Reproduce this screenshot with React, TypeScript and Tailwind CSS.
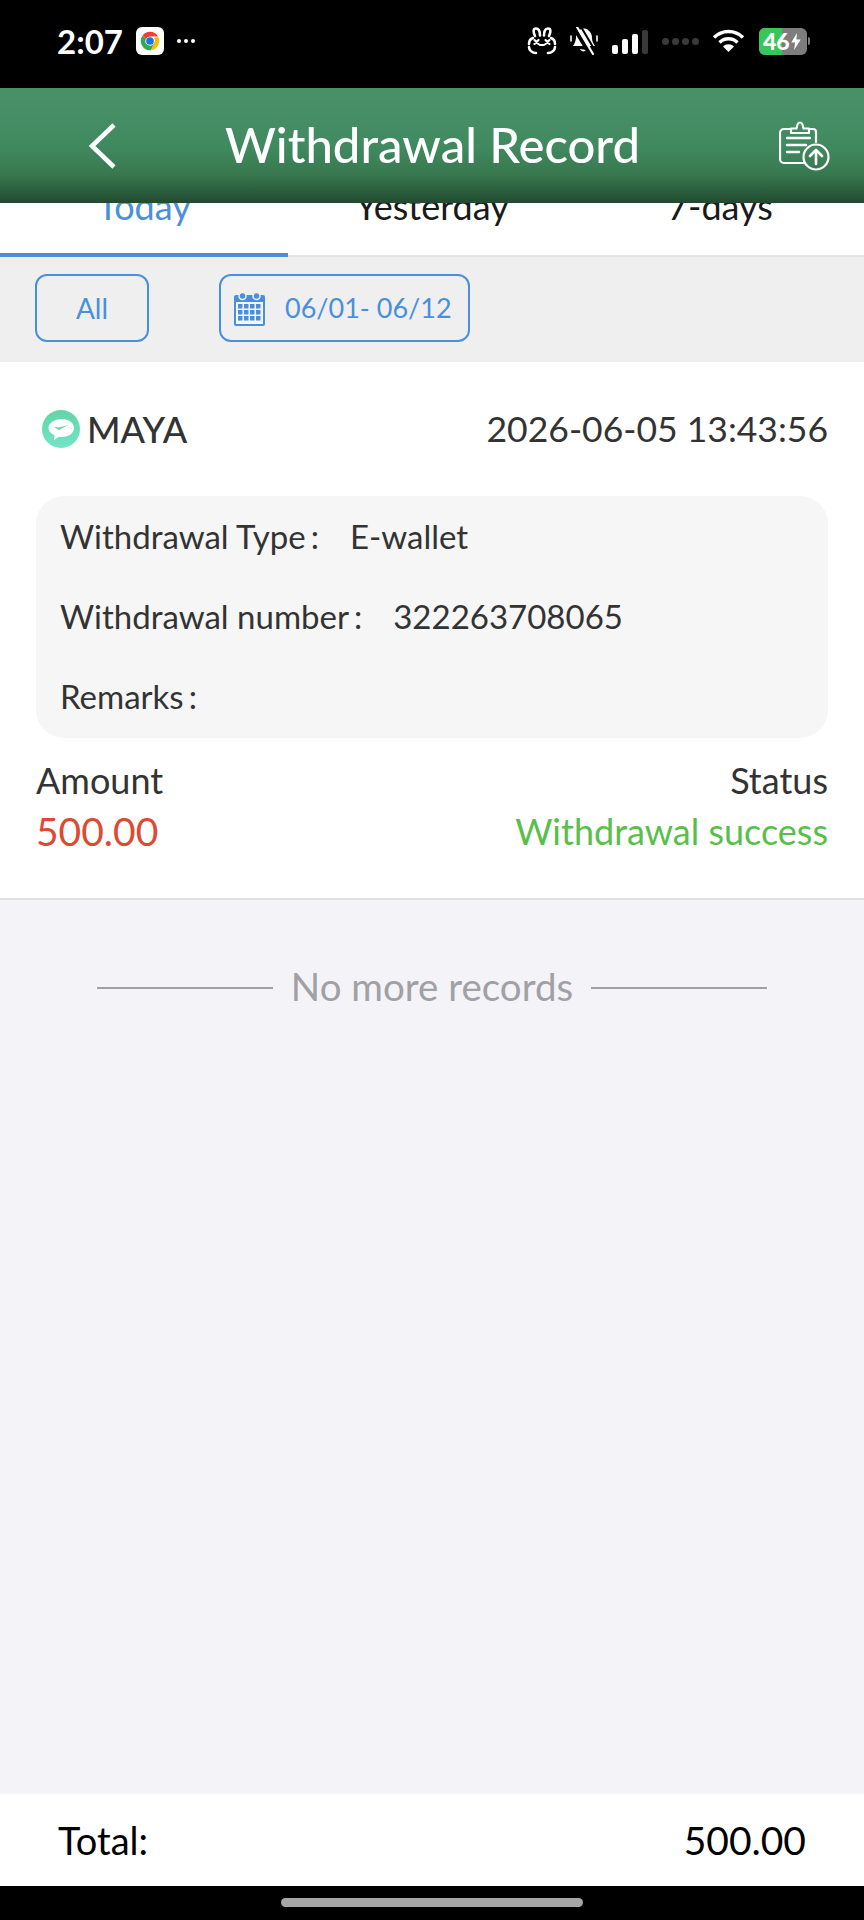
const FONT = 'font-["Lato","Noto_Sans",sans-serif]'

function ChromeIcon() {
  return (
    <div className="w-[28px] h-[28px] rounded-[6px] bg-white flex items-center justify-center">
      <svg viewBox="0 0 24 24" className="w-[22px] h-[22px]">
        <path d="M12 2a10 10 0 0 1 8.66 5H12a5 5 0 0 0-4.6 3L3.9 6.1A10 10 0 0 1 12 2z" fill="#ea4335" />
        <path d="M20.66 7A10 10 0 0 1 12.9 22l3.4-7.5A5 5 0 0 0 16.3 9z" fill="#fbbc04" />
        <path d="M3.9 6.1A10 10 0 0 0 12.9 22l3.4-7.5a5 5 0 0 1-8.9-4.5z" fill="#34a853" />
        <circle cx="12" cy="12" r="4.2" fill="#1a73e8" />
      </svg>
    </div>
  )
}

function BunnyIcon() {
  return (
    <svg viewBox="0 0 30 28" className="w-[30px] h-[28px]" fill="none" stroke="#fff" strokeWidth="2.6" strokeLinecap="round">
      <path d="M8 9C6 5 6 1.500 9 1.500s4 3 4 7" />
      <path d="M17 8.500c0-4 1-7 4-7s3 3.500 1 7.500" />
      <path d="M6 11c-3 1-4 4-4 6M24 11c3 1 4 4 4 6" />
      <path d="M2 20c0 3 3 6 7 6M28 20c0 3-3 6-7 6" />
      <path d="M7.500 13l4 4M11.500 13l-4 4M18.500 13l4 4M22.500 13l-4 4M13 18h4" strokeWidth="2.200" />
    </svg>
  )
}

function MutedBell() {
  return (
    <svg viewBox="0 0 28 28" className="w-[28px] h-[28px]">
      <path d="M10 3c1-2 6-2 8 0 3 2 4 5 4 8 0 3 1 5 3 8H3c2-3 3-6 3-9 0-3 2-6 4-7z" fill="#fff" />
      <path d="M10 22c1 3 5 3 7 1z" fill="#fff" />
      <path d="M3 -1l18 30" stroke="#000" strokeWidth="4" />
      <path d="M7 0l16 27" stroke="#fff" strokeWidth="2.200" strokeLinecap="round" />
      <path d="M10.500 -1l16 27" stroke="#000" strokeWidth="2" />
      <path d="M1 9v5M27 9v5" stroke="#fff" strokeWidth="1.600" strokeLinecap="round" />
    </svg>
  )
}

function SignalBars() {
  return (
    <div className="flex items-end gap-[4px] w-[38px] h-[26px]">
      <span className="w-[6px] h-[9px] rounded-[2px] bg-white" />
      <span className="w-[6px] h-[15px] rounded-[2px] bg-white" />
      <span className="w-[6px] h-[20px] rounded-[2px] bg-white" />
      <span className="w-[6px] h-[24px] rounded-[2px] bg-[#3a3a3a]" />
    </div>
  )
}

function WifiIcon() {
  return (
    <svg viewBox="0 0 33 24" className="w-[33px] h-[24px]" fill="none" stroke="#fff" strokeWidth="3.4">
      <path d="M2 8.500c8-8 21-8 29 0" />
      <path d="M7.500 13.500c5-5 13-5 18 0" />
      <path d="M16.500 23l-5.500-5.500c3-3 8-3 11 0z" fill="#fff" stroke="none" />
    </svg>
  )
}

function Battery() {
  return (
    <div className="flex items-center gap-[1px]">
      <div className="relative w-[48px] h-[27px] rounded-[6px] bg-[#7d7d7d] overflow-hidden">
        <div className="w-[23px] h-full bg-[#35c759]" />
        <div className="absolute inset-0 flex items-center pl-[4px] gap-[1px] text-white text-[23px] font-black leading-none">
          46
          <svg viewBox="0 0 10 18" className="w-[10px] h-[17px]">
            <path d="M6 0L0 10h4l-1 8 7-11H5.500z" fill="#fff" />
          </svg>
        </div>
      </div>
      <span className="w-[2px] h-[8px] rounded-r bg-[#7d7d7d]" />
    </div>
  )
}

function BackChevron() {
  return (
    <svg viewBox="0 0 28 46" className="w-[28px] h-[46px]" fill="none" stroke="#fff" strokeWidth="4.500">
      <path d="M26 2L4 23l22 21" />
    </svg>
  )
}

function ClipboardUpload() {
  return (
    <svg viewBox="0 0 51 50" className="w-[51px] h-[50px]" fill="none" stroke="#fff" strokeWidth="2.200" strokeLinecap="round" strokeLinejoin="round">
      <path d="M12 8H5a4 4 0 0 0-4 4v26a4 4 0 0 0 4 4h20" />
      <path d="M30 8h4a3 3 0 0 1 3 3v10" />
      <path d="M12 12V7.500h5.500C18 4 19.500 1.500 21 1.500S24 4 24.500 7.500H30V12z" />
      <path d="M8 17h23M8 24h19M8 31h12" strokeWidth="2.400" />
      <circle cx="37" cy="36" r="12.500" />
      <path d="M37 43V29M31 35l6-6 6 6" strokeWidth="2.600" />
    </svg>
  )
}

function CalendarIcon() {
  return (
    <svg viewBox="0 0 31 35" className="w-[31px] h-[35px]">
      <path d="M2 4h27a2 2 0 0 1 2 2v27a2 2 0 0 1-2 2H2a2 2 0 0 1-2-2V6a2 2 0 0 1 2-2z" fill="#4a8fdb" />
      <rect x="2" y="11" width="27" height="22" fill="#f3f6fa" />
      <circle cx="8.500" cy="5" r="3.500" fill="#4a8fdb" stroke="#efefef" strokeWidth="1.500" />
      <circle cx="22.500" cy="5" r="3.500" fill="#4a8fdb" stroke="#efefef" strokeWidth="1.500" />
      {[13, 19, 25].map(y =>
        [4, 10, 16, 22].map(x => <rect key={`${x}-${y}`} x={x} y={y} width="4.500" height="4.500" fill="#4a8fdb" />)
      )}
    </svg>
  )
}

function MayaLogo() {
  return (
    <svg viewBox="0 0 38 38" className="w-[38px] h-[38px]">
      <defs>
        <linearGradient id="maya" x1="0" y1="0" x2="0" y2="1">
          <stop offset="0" stopColor="#62d6a6" />
          <stop offset="1" stopColor="#72e4c8" />
        </linearGradient>
      </defs>
      <circle cx="19" cy="19" r="19" fill="url(#maya)" />
      <path d="M20 9c7 0 12 4 12 9s-5 9-12 9c-1 0-2 0-3-.2L12 30l.5-5C8.500 23.500 6.500 21 6.500 18c0-5 6-9 13.500-9z" fill="#fff" />
      <path d="M12 17l5 3 9-5-9 2.500z" fill="#62d6a6" />
    </svg>
  )
}

export default function App() {
  const tabs = ['Today', 'Yesterday', '7-days']

  return (
    <div className={`w-[864px] h-[1920px] flex flex-col bg-[#f3f3f8] ${FONT}`}>
      <div className="h-[88px] shrink-0 bg-black flex items-center justify-between pl-[57px] pr-[54px] pb-[6px]">
        <div className="flex items-center">
          <span className="text-white text-[33px] font-bold leading-none">2:07</span>
          <span className="ml-[13px]"><ChromeIcon /></span>
          <span className="ml-[13px] flex gap-[3px]">
            <i className="w-[4px] h-[4px] rounded-full bg-white" />
            <i className="w-[4px] h-[4px] rounded-full bg-white" />
            <i className="w-[4px] h-[4px] rounded-full bg-white" />
          </span>
        </div>
        <div className="flex items-center">
          <BunnyIcon />
          <span className="ml-[13px]"><MutedBell /></span>
          <span className="ml-[14px]"><SignalBars /></span>
          <span className="ml-[12px] flex gap-[3px]">
            {[0, 1, 2, 3].map(i => <i key={i} className="w-[7px] h-[7px] rounded-full bg-[#3a3a3a]" />)}
          </span>
          <span className="ml-[13px]"><WifiIcon /></span>
          <span className="ml-[14px]"><Battery /></span>
        </div>
      </div>

      <div className="h-[115px] shrink-0 flex items-center pl-[88px] pr-[34px] bg-[linear-gradient(to_bottom,#4a9169_0%,#418a60_50%,#38784f_75%,#214a30_100%)]">
        <BackChevron />
        <h1 className="flex-1 text-center pr-[30px] text-white text-[49px] font-medium leading-none mb-[2px]">Withdrawal Record</h1>
        <ClipboardUpload />
      </div>

      <div className="h-[54px] shrink-0 bg-white flex overflow-hidden">
        {tabs.map((tab, i) => (
          <div key={tab} className={`flex-1 flex justify-center h-[54px] ${i === 0 ? 'border-b-4 border-[#4a8fdb] text-[#4a8fdb]' : 'border-b-2 border-[#e4e4e4] text-[#1a1a1a]'}`}>
            <span className="text-[36px] leading-none -mt-[15px]">{tab}</span>
          </div>
        ))}
      </div>

      <div className="h-[105px] shrink-0 bg-[#efefef] flex items-center pl-[35px] pb-[3px]">
        <div className="w-[114px] h-[68px] border-2 border-[#4a8fdb] rounded-[12px] flex items-center justify-center text-[#4a8fdb] text-[28px]">All</div>
        <div className="ml-[70px] w-[251px] h-[68px] border-2 border-[#4a8fdb] rounded-[12px] flex items-center pl-[13px] text-[#4a8fdb] text-[27px]">
          <CalendarIcon />
          <span className="ml-[20px]">06/01- 06/12</span>
        </div>
      </div>

      <div className="h-[538px] shrink-0 bg-white border-b-2 border-[#e0e0e0] px-[36px] flex flex-col">
        <div className="h-[134px] shrink-0 flex items-center justify-between">
          <div className="flex items-center ml-[6px]">
            <MayaLogo />
            <span className="ml-[7px] text-[#333] text-[36px] font-medium leading-none">MAYA</span>
          </div>
          <span className="text-[#333] text-[35.5px] leading-none">2026-06-05 13:43:56</span>
        </div>
        <div className="h-[242px] shrink-0 bg-[#f6f6f6] rounded-[28px] px-[24px] pb-[3px] flex flex-col justify-center gap-[40px] text-[#333] text-[33px] leading-[40px]">
          <div>Withdrawal Type<span className="ml-[5px]">:</span><span className="ml-[31px]">E-wallet</span></div>
          <div>Withdrawal number<span className="ml-[5px]">:</span><span className="ml-[31px]">322263708065</span></div>
          <div>Remarks<span className="ml-[5px]">:</span></div>
        </div>
        <div className="flex justify-between mt-[22px] text-[36px] leading-[40px] text-[#333]">
          <span>Amount</span>
          <span>Status</span>
        </div>
        <div className="flex justify-between mt-[11px] text-[36px] leading-[40px]">
          <span className="text-[#dc4a33] text-[39px]">500.00</span>
          <span className="text-[#59bf4b]">Withdrawal success</span>
        </div>
      </div>

      <div className="flex-1 flex justify-center pt-[66px]">
        <div className="flex items-center h-[40px] text-[#a0a0a5] text-[38.5px]">
          <span className="w-[176px] h-[2px] mt-[3px] bg-[#a0a0a5]" />
          <span className="mx-[18px] leading-none">No more records</span>
          <span className="w-[176px] h-[2px] mt-[3px] bg-[#a0a0a5]" />
        </div>
      </div>

      <div className="h-[92px] shrink-0 bg-white flex items-center justify-between pl-[58px] pr-[58px] text-[38px] text-black">
        <span>Total:</span>
        <span className="text-[39px]">500.00</span>
      </div>

      <div className="h-[34px] shrink-0 bg-black flex justify-center pt-[12px]">
        <div className="w-[302px] h-[9px] rounded-full bg-[#a6a6a6]" />
      </div>
    </div>
  )
}
